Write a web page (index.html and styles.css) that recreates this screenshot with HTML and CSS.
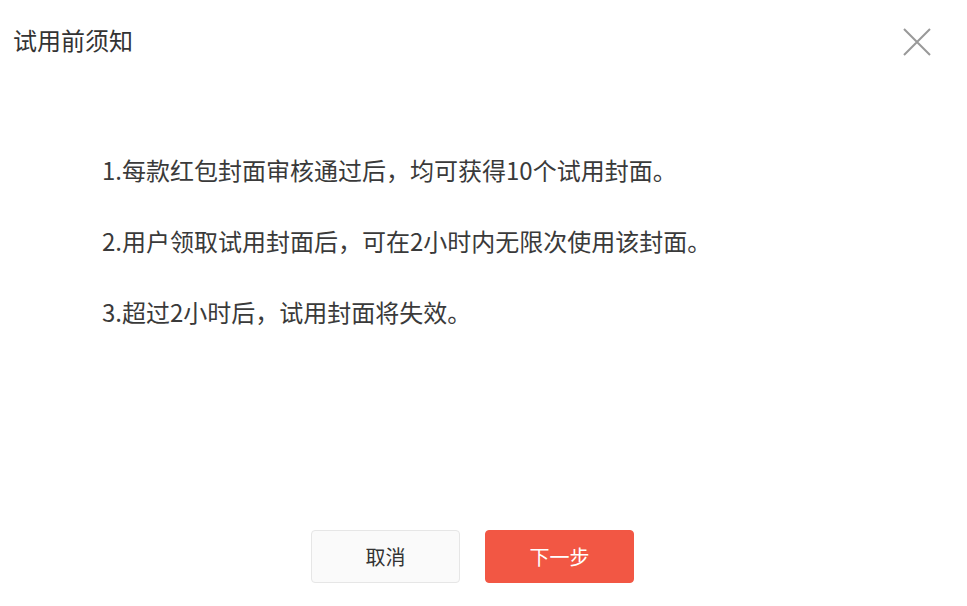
FILE: index.html
```html
<!DOCTYPE html>
<html lang="zh">
<head>
<meta charset="utf-8">
<link rel="stylesheet" href="styles.css">
</head>
<body>
<div class="dialog">
  <div class="header">
    <div class="title">试用前须知</div>
    <button class="close" aria-label="关闭">
      <svg width="28" height="28" viewBox="0 0 28 28"><path d="M1 1 L27 27 M27 1 L1 27" stroke="#999" stroke-width="2" fill="none"/></svg>
    </button>
  </div>
  <div class="content">
    <p>1.每款红包封面审核通过后，均可获得10个试用封面。</p>
    <p>2.用户领取试用封面后，可在2小时内无限次使用该封面。</p>
    <p>3.超过2小时后，试用封面将失效。</p>
  </div>
  <div class="footer">
    <button class="btn btn-cancel">取消</button>
    <button class="btn btn-next">下一步</button>
  </div>
</div>
</body>
</html>
```
FILE: styles.css
```css
html, body {
  margin: 0;
  padding: 0;
  background: #fff;
}
body {
  font-family: "Noto Sans CJK SC", "Noto Sans", sans-serif;
  color: #333;
}
.dialog {
  width: 967px;
  height: 606px;
  display: flex;
  flex-direction: column;
}
.header {
  height: 84px;
  display: flex;
  align-items: center;
  justify-content: space-between;
  padding: 0 36px 0 13px;
}
.title {
  font-size: 24px;
  line-height: 32px;
  margin-top: -4px;
  color: #333;
}
.close {
  border: 0;
  background: none;
  padding: 0;
  width: 28px;
  height: 28px;
  display: flex;
}
.content {
  flex: 1;
  padding: 68px 0 0 102px;
}
.content p {
  margin: 0 0 35px;
  font-size: 24px;
  line-height: 36px;
  color: #3a3a3a;
}
.footer {
  display: flex;
  justify-content: center;
  gap: 25px;
  padding: 0 22px 23px 0;
}
.btn {
  width: 149px;
  height: 53px;
  border-radius: 4px;
  font-family: inherit;
  font-size: 20px;
  cursor: pointer;
}
.btn-cancel {
  background: #fafafa;
  border: 1px solid #e6e6e6;
  color: #333;
}
.btn-next {
  background: #f25744;
  border: 1px solid #f25744;
  color: #fff;
}
```
